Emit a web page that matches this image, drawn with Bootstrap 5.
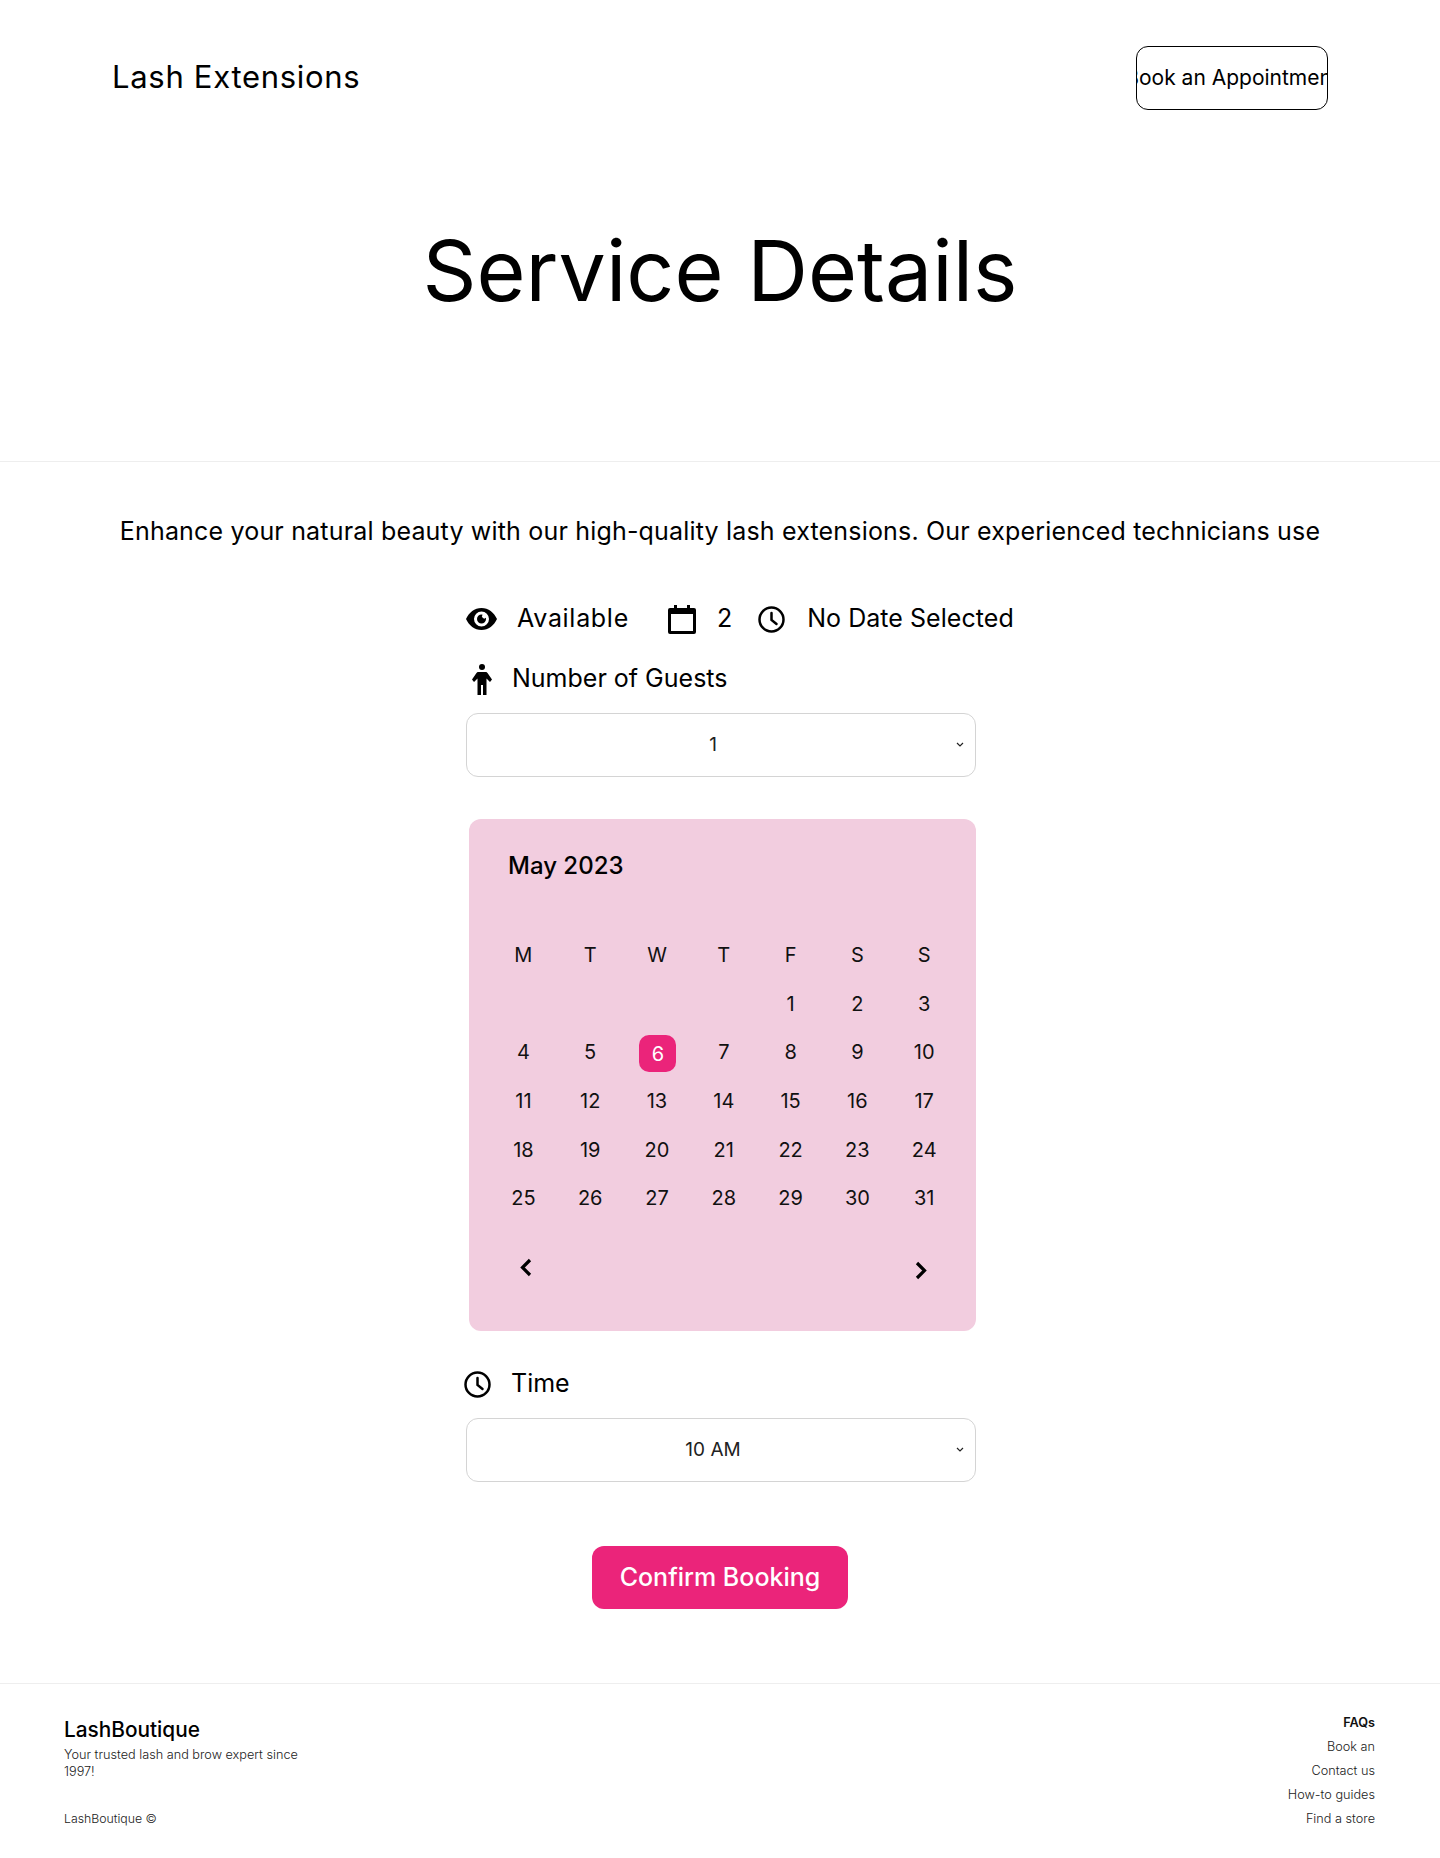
<!DOCTYPE html>
<html lang="en">
<head>
<meta charset="utf-8">
<title>Service Details</title>
<link href="https://cdn.jsdelivr.net/npm/bootstrap@5.3.0/dist/css/bootstrap.min.css" rel="stylesheet">
<style>
body{font-family:Inter,"Open Sans",sans-serif;color:#000;background:#fff}
.top-bar{padding:46px 112px 0 112px}
.brand-name{font-size:31px;line-height:61px;letter-spacing:.7px;align-self:flex-start}
.appt-btn{width:192px;height:64px;border:1px solid #000;border-radius:12px;overflow:hidden;white-space:nowrap;font-size:21px;background:#fff;color:#000}
.hero-wrap{height:352px;border-bottom:1px solid #eee;padding-top:103px}
.hero-title{font-size:84.2px;line-height:114px;font-weight:400;margin:0}
.intro{font-size:25px;letter-spacing:.18px;line-height:36px;margin:51px 0 0;white-space:nowrap}
.stack{width:510px;margin-left:466px}
.meta-row{height:48px;margin-top:46px;font-size:25px;white-space:nowrap}
.meta-row svg,.lbl-row svg{flex:none}
.gap-a{margin-left:20px;letter-spacing:.7px}.gap-b{margin-left:39px}.gap-c{margin-left:21px}.gap-d{margin-left:26px}.gap-e{margin-left:22px;letter-spacing:.05px}
.lbl-row{font-size:25px;height:48px}
.guest-row{margin-top:12px}
.person-ico{margin-left:6px}
.guest-txt{margin-left:20px}
.time-row{margin-top:29px}
.time-ico{margin-left:-2px}
.time-txt{margin-left:20px}
.pick{width:510px;height:64px;margin-top:10px;border:1px solid #d4d4d4;border-radius:12px;padding-right:11px;font-size:19px;color:#222}
.pick-val{flex:1;padding-left:3px;text-align:center}
.pick svg{flex:none}
.cal-box{width:507px;height:512px;margin:42px 0 0 3px;background:#f2cddf;border-radius:12px;padding:27px 18px 0 21px}
.cal-head{font-size:24px;font-weight:500;line-height:40px;margin-left:18px;margin-bottom:45px}
.cal-grid{display:grid;grid-template-columns:repeat(7,66.8px);grid-auto-rows:48.6px;font-size:20px;color:#111;text-align:center;align-items:center;justify-items:center}
.sel-day{width:37px;height:37px;background:#eb247a;color:#fff;border-radius:10px;display:flex;align-items:center;justify-content:center;margin:3px 0 0 2px}
.cal-nav{margin-top:35px;padding:0 30px 0 29px}
.nav-next{margin-top:3px}
.cta-wrap{margin-top:64px}
.go-btn{background:#eb247a;color:#fff;width:256px;height:63px;border-radius:12px;font-size:25px;font-weight:500;border:0}
.bottom-bar{margin-top:74px;border-top:1px solid #eee;padding:27px 65px 0 64px;font-weight:300;font-size:12.7px}
.foot-name{font-size:20.8px;font-weight:500;line-height:30px;margin-top:4px}
.foot-tag{width:250px;line-height:17px;color:#222;margin-top:1px}
.foot-copy{margin-top:27px;line-height:24px;color:#222;font-size:12.3px}
.foot-links{line-height:24px;color:#222;text-align:right}
.foot-links strong{font-weight:600;color:#111}
</style>
</head>
<body>
<header class="top-bar d-flex justify-content-between align-items-center">
  <div class="brand-name">Lash Extensions</div>
  <div class="appt-btn d-flex justify-content-center align-items-center">Book an Appointment</div>
</header>
<section class="hero-wrap text-center">
  <h1 class="hero-title">Service Details</h1>
</section>
<p class="intro text-center">Enhance your natural beauty with our high-quality lash extensions. Our experienced technicians use</p>
<main class="stack">
  <div class="meta-row d-flex align-items-center">
    <svg width="31" height="22" viewBox="0 0 31 22"><path fill-rule="evenodd" d="M15.500 0C8.500 0 3 4.500 0 11c3 6.500 8.500 11 15.500 11S28 17.500 31 11C28 4.500 22.500 0 15.500 0zm0 3.500a7.500 7.500 0 1 1 0 15 7.500 7.500 0 0 1 0-15z"/><path d="M15.500 6.500a4.500 4.500 0 1 0 4.500 4.500c0-.4-.05-.8-.15-1.150a2 2 0 0 1-3.200-3.200 4.500 4.500 0 0 0-1.150-.15z"/></svg>
    <span class="gap-a">Available</span>
    <svg class="gap-b" width="28" height="29" viewBox="0 0 28 29"><path d="M6 0h3v3h10V0h3v3h4a2 2 0 0 1 2 2v22a2 2 0 0 1-2 2H2a2 2 0 0 1-2-2V5a2 2 0 0 1 2-2h4zM3 9v17h22V9z"/></svg>
    <span class="gap-c">2</span>
    <svg class="gap-d" width="27" height="27" viewBox="0 0 27 27" fill="none" stroke="#000" stroke-width="2.500"><circle cx="13.500" cy="13.500" r="12"/><path d="M13.500 7v7l5 4" stroke-linecap="round"/></svg>
    <span class="gap-e">No Date Selected</span>
  </div>
  <div class="lbl-row guest-row d-flex align-items-center">
    <svg class="person-ico" width="20" height="31" viewBox="0 0 20 31"><circle cx="10" cy="3" r="3"/><path d="M6.500 8h7c1 0 1.600.5 2.200 1.300L20 15.500 18 18l-3.500-3.500V31H11V21H9v10H5.500V14.500L2 18l-2-2.500 4.300-6.200C4.900 8.500 5.500 8 6.500 8z"/></svg>
    <span class="guest-txt">Number of Guests</span>
  </div>
  <div class="pick d-flex align-items-center">
    <span class="pick-val">1</span>
    <svg width="8" height="6" viewBox="0 0 8 6" fill="none" stroke="#222" stroke-width="1.200"><path d="M1 1l3 3 3-3"/></svg>
  </div>
  <section class="cal-box">
    <div class="cal-head">May 2023</div>
    <div class="cal-grid">
      <span>M</span><span>T</span><span>W</span><span>T</span><span>F</span><span>S</span><span>S</span>
      <span></span><span></span><span></span><span></span><span>1</span><span>2</span><span>3</span>
      <span>4</span><span>5</span><span class="sel-day">6</span><span>7</span><span>8</span><span>9</span><span>10</span>
      <span>11</span><span>12</span><span>13</span><span>14</span><span>15</span><span>16</span><span>17</span>
      <span>18</span><span>19</span><span>20</span><span>21</span><span>22</span><span>23</span><span>24</span>
      <span>25</span><span>26</span><span>27</span><span>28</span><span>29</span><span>30</span><span>31</span>
    </div>
    <div class="cal-nav d-flex justify-content-between">
      <svg width="13" height="19" viewBox="0 0 13 19" fill="none" stroke="#000" stroke-width="3.200"><path d="M11 2L3.500 9.500 11 17"/></svg>
      <svg class="nav-next" width="13" height="19" viewBox="0 0 13 19" fill="none" stroke="#000" stroke-width="3.200"><path d="M2 2l7.500 7.500L2 17"/></svg>
    </div>
  </section>
  <div class="lbl-row time-row d-flex align-items-center">
    <svg class="time-ico" width="27" height="27" viewBox="0 0 27 27" fill="none" stroke="#000" stroke-width="2.500"><circle cx="13.500" cy="13.500" r="12"/><path d="M13.500 7v7l5 4" stroke-linecap="round"/></svg>
    <span class="time-txt">Time</span>
  </div>
  <div class="pick d-flex align-items-center">
    <span class="pick-val">10 AM</span>
    <svg width="8" height="6" viewBox="0 0 8 6" fill="none" stroke="#222" stroke-width="1.200"><path d="M1 1l3 3 3-3"/></svg>
  </div>
</main>
<div class="cta-wrap text-center"><button class="go-btn" type="button">Confirm Booking</button></div>
<footer class="bottom-bar d-flex justify-content-between">
  <div>
    <div class="foot-name">LashBoutique</div>
    <div class="foot-tag">Your trusted lash and brow expert since 1997!</div>
    <div class="foot-copy">LashBoutique ©</div>
  </div>
  <div class="foot-links">
    <div><strong>FAQs</strong></div>
    <div>Book an</div>
    <div>Contact us</div>
    <div>How-to guides</div>
    <div>Find a store</div>
  </div>
</footer>
</body>
</html>
